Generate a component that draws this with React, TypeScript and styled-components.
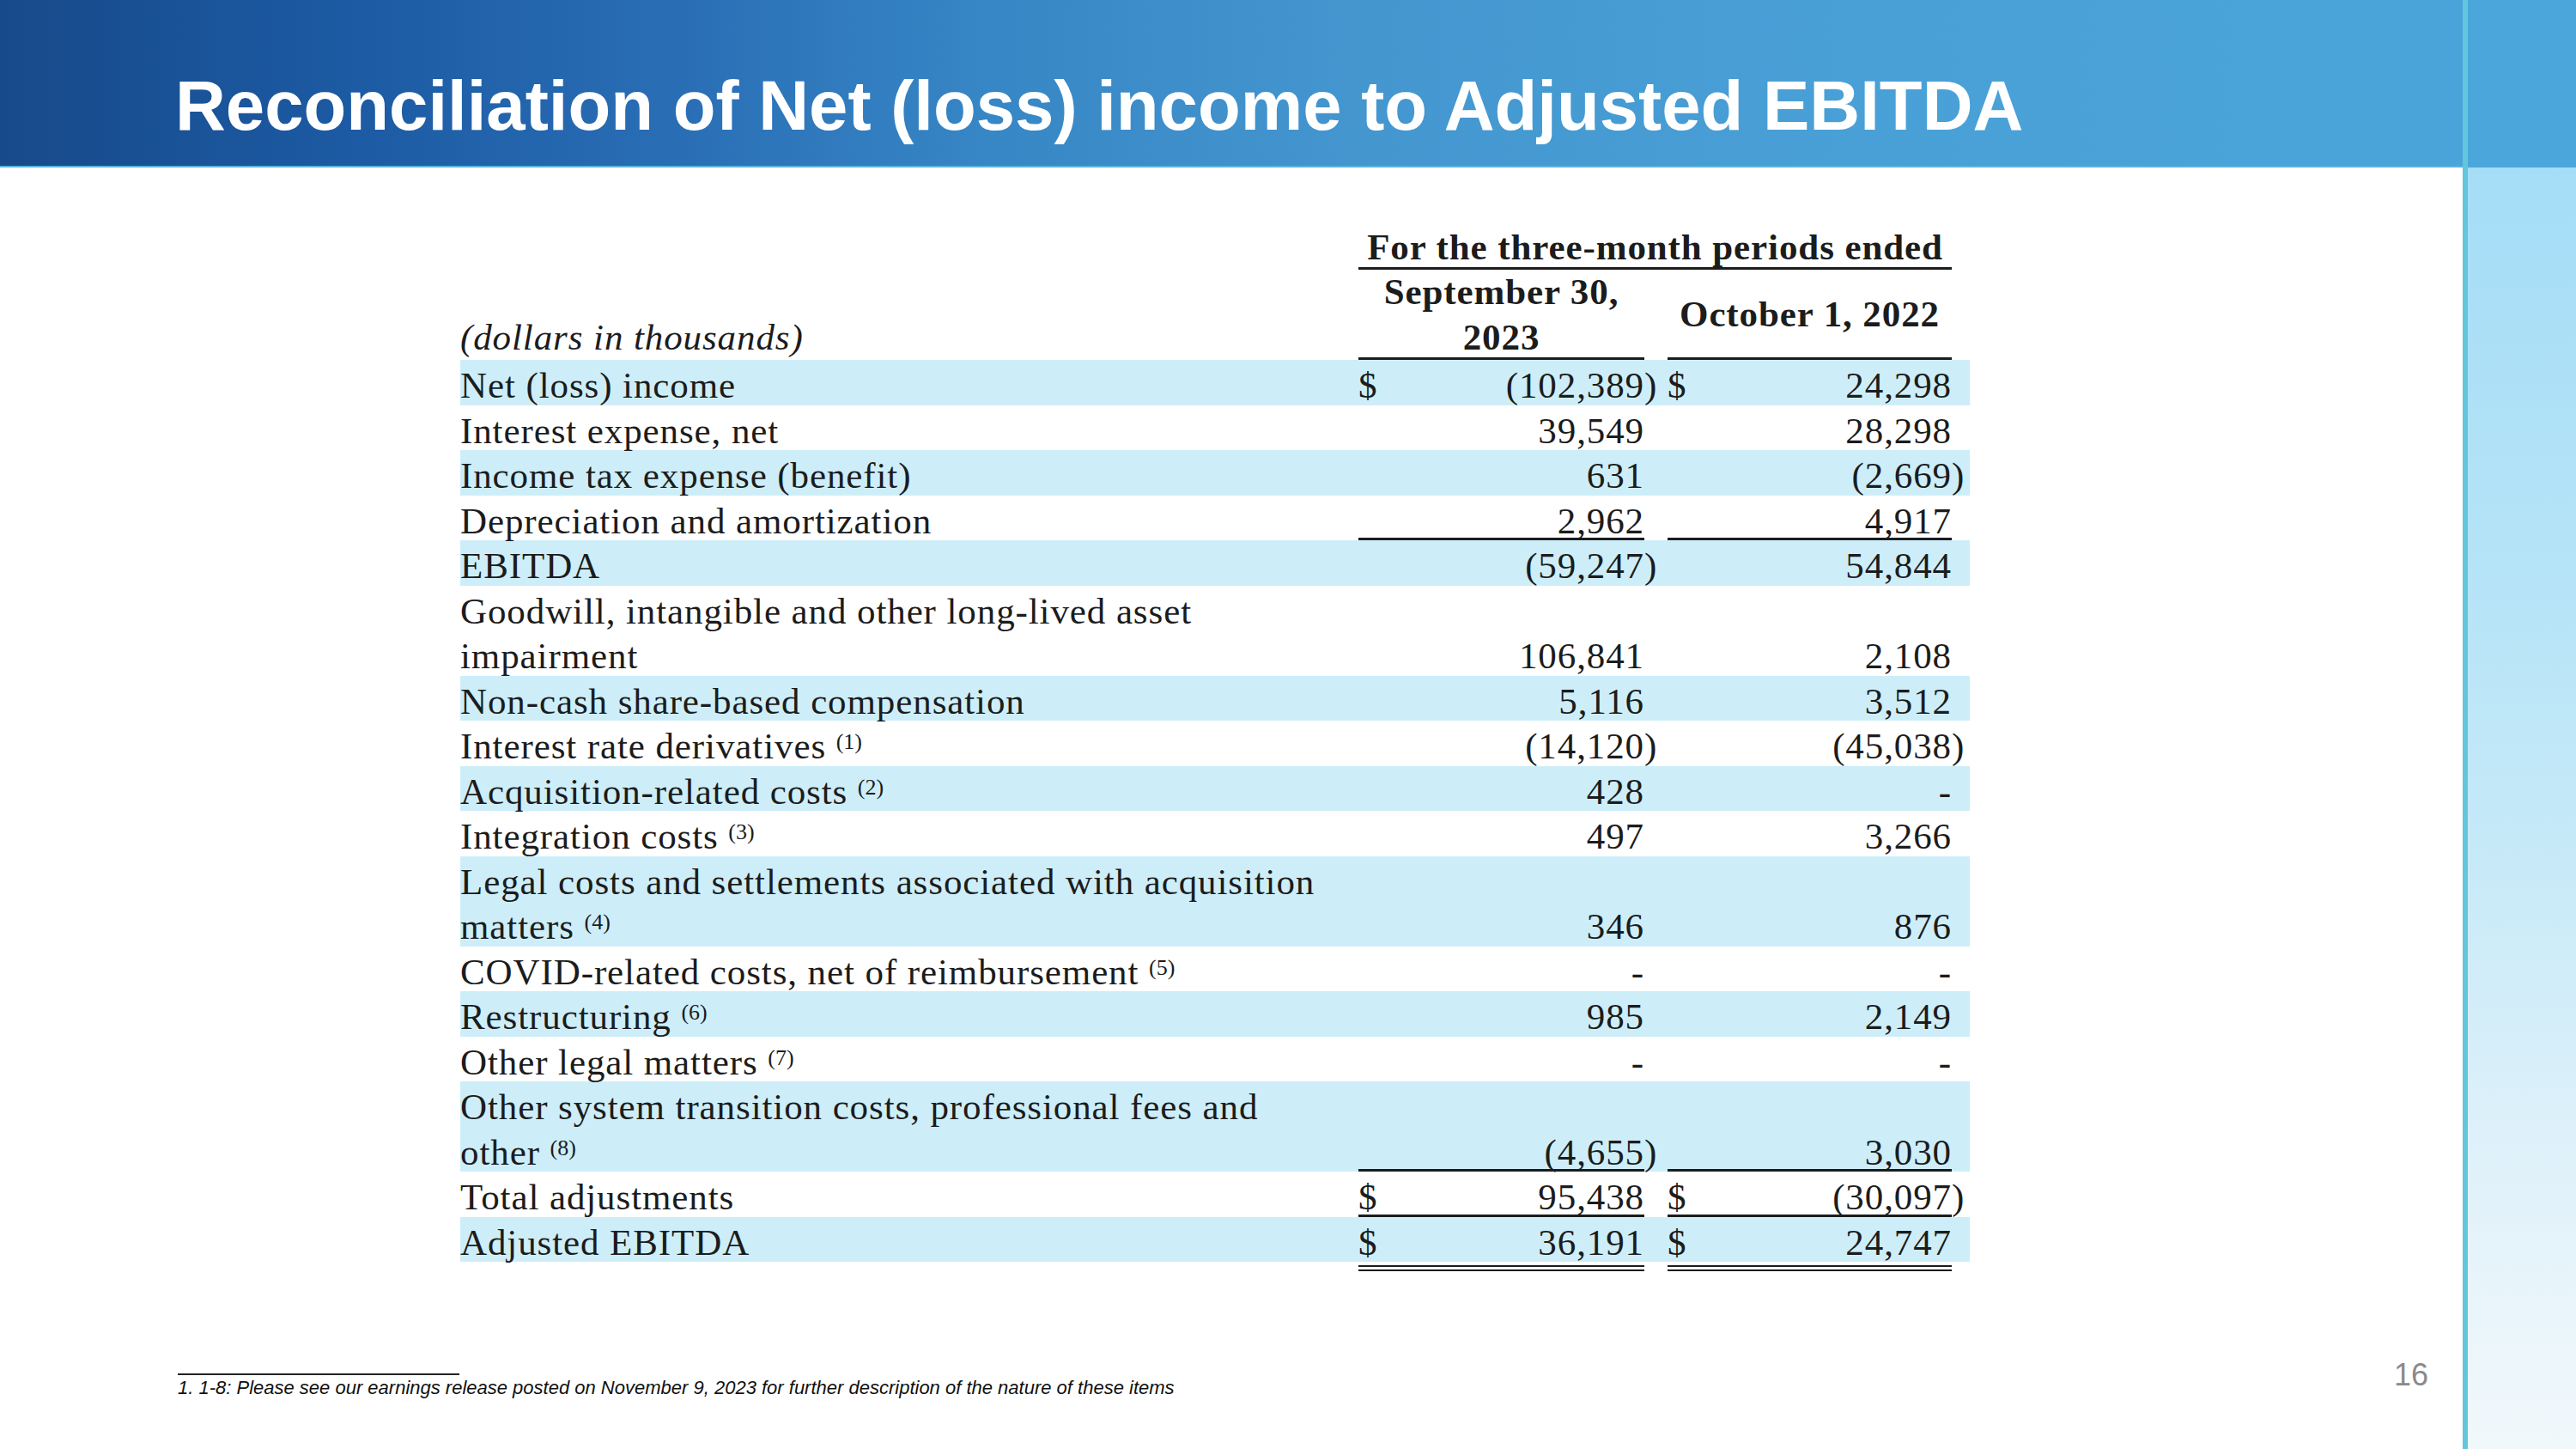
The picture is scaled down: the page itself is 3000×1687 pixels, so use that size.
import React from 'react';
import styled, { createGlobalStyle } from 'styled-components';

const LINE = 52.5;
const INK = '#1c1c1c';
const ROW_BLUE = '#cdeef9';

const GlobalStyle = createGlobalStyle`
  html, body { margin: 0; padding: 0; background: #ffffff; }
  body { width: 3000px; height: 1687px; overflow: hidden; }
`;

const Page = styled.div`
  display: flex;
  width: 3000px;
  height: 1687px;
  background: #ffffff;
`;

const Main = styled.div`
  display: flex;
  flex-direction: column;
  width: 2868px;
  height: 100%;
`;

const Header = styled.header`
  box-sizing: border-box;
  height: 195px;
  padding: 82px 0 0 204px;
  background: linear-gradient(90deg, #174a8a 0%, #1c5aa3 14%, #2a6fb6 28%, #3786c5 40%, #4496cf 55%, #49a0d7 75%, #4aa4da 100%);
  box-shadow: inset 0 -2px 0 #58b4de;
`;

const Title = styled.h1`
  margin: 0;
  font-family: 'Liberation Sans', Arial, sans-serif;
  font-weight: bold;
  font-size: 81.5px;
  line-height: 81px;
  color: #ffffff;
  white-space: nowrap;
`;

const Body = styled.div`
  flex: 1;
  display: flex;
  flex-direction: column;
`;

const Table = styled.div`
  width: 1758px;
  margin: 66.5px 0 0 536px;
  font-family: 'Liberation Serif', 'Times New Roman', serif;
  font-size: 43px;
  letter-spacing: 0.9px;
  color: ${INK};
`;

const COLS = '1046px 333px 27px 331px 21px';

const HeadTop = styled.div`
  display: grid;
  grid-template-columns: ${COLS};
  grid-template-rows: ${LINE}px;
`;

const HeadSpan = styled.div`
  grid-column: 2 / 5;
  text-align: center;
  font-weight: bold;
  line-height: ${LINE}px;
  white-space: nowrap;
  box-shadow: inset 0 -3px 0 ${INK};
`;

const HeadMain = styled.div`
  display: grid;
  grid-template-columns: ${COLS};
  grid-template-rows: ${LINE * 2}px;
`;

const UnitsNote = styled.div`
  grid-column: 1;
  align-self: end;
  font-style: italic;
  line-height: ${LINE}px;
  white-space: nowrap;
`;

const ColHead = styled.div<{ $col: number }>`
  grid-column: ${(p) => p.$col};
  display: flex;
  flex-direction: column;
  justify-content: center;
  align-items: center;
  font-weight: bold;
  line-height: ${LINE}px;
  white-space: nowrap;
  box-shadow: inset 0 -3px 0 ${INK};
`;

const Row = styled.div<{ $lines: number; $blue: boolean }>`
  display: grid;
  grid-template-columns: ${COLS};
  grid-template-rows: ${(p) => p.$lines * LINE}px;
  background: ${(p) => (p.$blue ? ROW_BLUE : 'transparent')};
`;

const Label = styled.div`
  padding-top: 4px;
  line-height: ${LINE}px;
  white-space: nowrap;
`;

const Sup = styled.span`
  font-size: 26px;
  line-height: 0;
  letter-spacing: 0;
  vertical-align: 11px;
`;

const Value = styled.div<{ $rule: boolean }>`
  display: flex;
  justify-content: space-between;
  align-items: flex-end;
  box-shadow: ${(p) => (p.$rule ? `inset 0 -3px 0 ${INK}` : 'none')};
`;

const Cell = styled.span`
  line-height: ${LINE}px;
  margin-bottom: -4px;
  white-space: nowrap;
`;

const Paren = styled.div`
  display: flex;
  align-items: flex-end;
`;

const DoubleRuleRow = styled.div`
  display: grid;
  grid-template-columns: ${COLS};
  padding-top: 4px;
`;

const DoubleRule = styled.div<{ $col: number }>`
  grid-column: ${(p) => p.$col};
  box-sizing: border-box;
  height: 7px;
  border-top: 2px solid ${INK};
  border-bottom: 2px solid ${INK};
`;

const Footer = styled.footer`
  margin-top: auto;
  display: flex;
  justify-content: space-between;
  align-items: flex-end;
  padding: 0 40px 58px 207px;
`;

const Footnote = styled.div`
  display: flex;
  flex-direction: column;
`;

const FootRule = styled.div`
  width: 328px;
  height: 2px;
  background: #222222;
`;

const FootText = styled.p`
  margin: 2px 0 0;
  font-family: 'Liberation Sans', Arial, sans-serif;
  font-style: italic;
  font-size: 22px;
  line-height: 26px;
  color: #111111;
  white-space: nowrap;
`;

const PageNum = styled.div`
  margin-bottom: 10px;
  font-family: 'Liberation Sans', Arial, sans-serif;
  font-size: 36px;
  line-height: 36px;
  color: #8a8a8a;
`;

const Divider = styled.div`
  width: 6px;
  height: 100%;
  background: #62c6dc;
`;

const Side = styled.aside`
  flex: 1;
  display: flex;
  flex-direction: column;
`;

const SideHead = styled.div`
  height: 195px;
  background: #4ba7db;
`;

const SideBody = styled.div`
  flex: 1;
  background: linear-gradient(180deg, #a5ddf7 0%, #b4e3f7 30%, #c8eaf8 55%, #e2f2fa 80%, #f1f8fb 100%);
`;

type RowData = {
  label: string[];
  note?: number;
  a: string;
  b: string;
  rule?: boolean;
};

const rows: RowData[] = [
  { label: ['Net (loss) income'], a: '$(102,389)', b: '$24,298' },
  { label: ['Interest expense, net'], a: '39,549', b: '28,298' },
  { label: ['Income tax expense (benefit)'], a: '631', b: '(2,669)' },
  { label: ['Depreciation and amortization'], a: '2,962', b: '4,917', rule: true },
  { label: ['EBITDA'], a: '(59,247)', b: '54,844' },
  { label: ['Goodwill, intangible and other long-lived asset', 'impairment'], a: '106,841', b: '2,108' },
  { label: ['Non-cash share-based compensation'], a: '5,116', b: '3,512' },
  { label: ['Interest rate derivatives'], note: 1, a: '(14,120)', b: '(45,038)' },
  { label: ['Acquisition-related costs'], note: 2, a: '428', b: '-' },
  { label: ['Integration costs'], note: 3, a: '497', b: '3,266' },
  { label: ['Legal costs and settlements associated with acquisition', 'matters'], note: 4, a: '346', b: '876' },
  { label: ['COVID-related costs, net of reimbursement'], note: 5, a: '-', b: '-' },
  { label: ['Restructuring'], note: 6, a: '985', b: '2,149' },
  { label: ['Other legal matters'], note: 7, a: '-', b: '-' },
  { label: ['Other system transition costs, professional fees and', 'other'], note: 8, a: '(4,655)', b: '3,030', rule: true },
  { label: ['Total adjustments'], a: '$95,438', b: '$(30,097)', rule: true },
  { label: ['Adjusted EBITDA'], a: '$36,191', b: '$24,747' },
];

function parse(v: string) {
  const dollar = v.startsWith('$');
  const raw = dollar ? v.slice(1) : v;
  const neg = raw.startsWith('(');
  const num = neg ? raw.slice(0, -1) : raw;
  return { dollar, neg, num };
}

function Amount({ value, rule }: { value: string; rule: boolean }) {
  const p = parse(value);
  return (
    <>
      <Value $rule={rule}>
        <Cell>{p.dollar ? '$' : ''}</Cell>
        <Cell>{p.num}</Cell>
      </Value>
      <Paren>
        <Cell>{p.neg ? ')' : ''}</Cell>
      </Paren>
    </>
  );
}

export default function App() {
  return (
    <>
      <GlobalStyle />
      <Page>
        <Main>
          <Header>
            <Title>Reconciliation of Net (loss) income to Adjusted EBITDA</Title>
          </Header>
          <Body>
            <Table>
              <HeadTop>
                <HeadSpan>For the three-month periods ended</HeadSpan>
              </HeadTop>
              <HeadMain>
                <UnitsNote>(dollars in thousands)</UnitsNote>
                <ColHead $col={2}>
                  <span>September 30,</span>
                  <span>2023</span>
                </ColHead>
                <ColHead $col={4}>
                  <span>October 1, 2022</span>
                </ColHead>
              </HeadMain>
              {rows.map((r, i) => (
                <Row key={r.label.join(' ')} $lines={r.label.length} $blue={i % 2 === 0}>
                  <Label>
                    {r.label.map((line, j) => (
                      <React.Fragment key={line}>
                        {j > 0 && <br />}
                        {line}
                        {j === r.label.length - 1 && r.note !== undefined && (
                          <>
                            {' '}
                            <Sup>({r.note})</Sup>
                          </>
                        )}
                      </React.Fragment>
                    ))}
                  </Label>
                  <Amount value={r.a} rule={!!r.rule} />
                  <Amount value={r.b} rule={!!r.rule} />
                </Row>
              ))}
              <DoubleRuleRow>
                <DoubleRule $col={2} />
                <DoubleRule $col={4} />
              </DoubleRuleRow>
            </Table>
            <Footer>
              <Footnote>
                <FootRule />
                <FootText>
                  1. 1-8: Please see our earnings release posted on November 9, 2023 for further description of the nature of these items
                </FootText>
              </Footnote>
              <PageNum>16</PageNum>
            </Footer>
          </Body>
        </Main>
        <Divider />
        <Side>
          <SideHead />
          <SideBody />
        </Side>
      </Page>
    </>
  );
}
